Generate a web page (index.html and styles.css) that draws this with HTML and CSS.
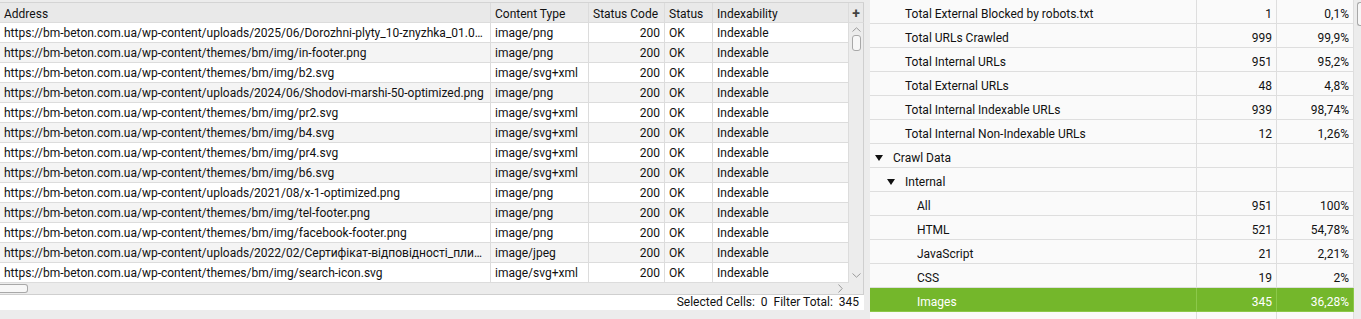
FILE: index.html
```html
<!DOCTYPE html>
<html lang="en">
<head>
  <meta charset="UTF-8">
  <title>Crawl Overview</title>
  <link rel="stylesheet" href="styles.css">
</head>
<body>
  <div class="app">
    <!-- URL table -->
    <section class="urls">
      <div class="row head">
        <span>Address</span>
        <span>Content Type</span>
        <span>Status Code</span>
        <span>Status</span>
        <span>Indexability</span>
        <span class="add">+</span>
      </div>
      <div class="body">
        <div class="rows">
          <div class="row"><span>https://bm-beton.com.ua/wp-content/uploads/2025/06/Dorozhni-plyty_10-znyzhka_01.06.2025.png</span><span>image/png</span><span class="num">200</span><span>OK</span><span>Indexable</span></div>
          <div class="row"><span>https://bm-beton.com.ua/wp-content/themes/bm/img/in-footer.png</span><span>image/png</span><span class="num">200</span><span>OK</span><span>Indexable</span></div>
          <div class="row"><span>https://bm-beton.com.ua/wp-content/themes/bm/img/b2.svg</span><span>image/svg+xml</span><span class="num">200</span><span>OK</span><span>Indexable</span></div>
          <div class="row"><span>https://bm-beton.com.ua/wp-content/uploads/2024/06/Shodovi-marshi-50-optimized.png</span><span>image/png</span><span class="num">200</span><span>OK</span><span>Indexable</span></div>
          <div class="row"><span>https://bm-beton.com.ua/wp-content/themes/bm/img/pr2.svg</span><span>image/svg+xml</span><span class="num">200</span><span>OK</span><span>Indexable</span></div>
          <div class="row"><span>https://bm-beton.com.ua/wp-content/themes/bm/img/b4.svg</span><span>image/svg+xml</span><span class="num">200</span><span>OK</span><span>Indexable</span></div>
          <div class="row"><span>https://bm-beton.com.ua/wp-content/themes/bm/img/pr4.svg</span><span>image/svg+xml</span><span class="num">200</span><span>OK</span><span>Indexable</span></div>
          <div class="row"><span>https://bm-beton.com.ua/wp-content/themes/bm/img/b6.svg</span><span>image/svg+xml</span><span class="num">200</span><span>OK</span><span>Indexable</span></div>
          <div class="row"><span>https://bm-beton.com.ua/wp-content/uploads/2021/08/x-1-optimized.png</span><span>image/png</span><span class="num">200</span><span>OK</span><span>Indexable</span></div>
          <div class="row"><span>https://bm-beton.com.ua/wp-content/themes/bm/img/tel-footer.png</span><span>image/png</span><span class="num">200</span><span>OK</span><span>Indexable</span></div>
          <div class="row"><span>https://bm-beton.com.ua/wp-content/themes/bm/img/facebook-footer.png</span><span>image/png</span><span class="num">200</span><span>OK</span><span>Indexable</span></div>
          <div class="row"><span>https://bm-beton.com.ua/wp-content/uploads/2022/02/Сертифікат-відповідності_плити-дорожні.jpg</span><span>image/jpeg</span><span class="num">200</span><span>OK</span><span>Indexable</span></div>
          <div class="row"><span>https://bm-beton.com.ua/wp-content/themes/bm/img/search-icon.svg</span><span>image/svg+xml</span><span class="num">200</span><span>OK</span><span>Indexable</span></div>
        </div>
        <div class="vscroll">
          <svg width="9" height="5" viewBox="0 0 9 5"><path d="M0.5 4.5 L4.5 0.8 L8.5 4.5" fill="none" stroke="#9a9a9a"/></svg>
          <span class="vthumb"></span>
          <svg class="down" width="9" height="5" viewBox="0 0 9 5"><path d="M0.5 0.5 L4.5 4.2 L8.5 0.5" fill="none" stroke="#9a9a9a"/></svg>
        </div>
      </div>
      <div class="hscroll">
        <span class="hthumb"></span>
        <svg width="5" height="9" viewBox="0 0 5 9"><path d="M0.5 0.5 L4.2 4.5 L0.5 8.5" fill="none" stroke="#9a9a9a"/></svg>
      </div>
      <div class="status">Selected Cells:&nbsp; 0&nbsp; Filter Total:&nbsp; 345</div>
    </section>

    <!-- Overview tree -->
    <section class="overview">
      <div class="tree">
        <div class="item"><span class="label l1">Total External Blocked by robots.txt</span><span>1</span><span>0,1%</span></div>
        <div class="item"><span class="label l1">Total URLs Crawled</span><span>999</span><span>99,9%</span></div>
        <div class="item"><span class="label l1">Total Internal URLs</span><span>951</span><span>95,2%</span></div>
        <div class="item"><span class="label l1">Total External URLs</span><span>48</span><span>4,8%</span></div>
        <div class="item"><span class="label l1">Total Internal Indexable URLs</span><span>939</span><span>98,74%</span></div>
        <div class="item"><span class="label l1">Total Internal Non-Indexable URLs</span><span>12</span><span>1,26%</span></div>
        <div class="item"><span class="label l0"><i class="tri"></i>Crawl Data</span><span></span><span></span></div>
        <div class="item"><span class="label l0b"><i class="tri"></i>Internal</span><span></span><span></span></div>
        <div class="item"><span class="label l2">All</span><span>951</span><span>100%</span></div>
        <div class="item"><span class="label l2">HTML</span><span>521</span><span>54,78%</span></div>
        <div class="item"><span class="label l2">JavaScript</span><span>21</span><span>2,21%</span></div>
        <div class="item"><span class="label l2">CSS</span><span>19</span><span>2%</span></div>
        <div class="item selected"><span class="label l2">Images</span><span>345</span><span>36,28%</span></div>
        <div class="item"><span class="label l2"></span><span></span><span></span></div>
      </div>
      <div class="edge"><span class="edge-thumb"></span></div>
    </section>
  </div>
</body>
</html>
```

FILE: styles.css
```css
* { box-sizing: border-box; }
html, body { margin: 0; padding: 0; }
body {
  font-family: Roboto, "Liberation Sans", sans-serif;
  font-size: 12px;
  color: #111;
  background: #ececec;
  height: 319px;
  overflow: hidden;
}
.app { display: flex; gap: 6px; height: 319px; overflow: hidden; }

/* Left table */
.urls { width: 864px; flex: none; padding-top: 2px; display: flex; flex-direction: column; }
.row {
  display: grid;
  grid-template-columns: 491px 98px 76px 48px 136px;
  height: 20px;
}
.row span {
  padding: 2px 4px 0; line-height: 17px;
  border-right: 1px solid #dcdcdc; border-bottom: 1px solid #dcdcdc;
  white-space: nowrap; overflow: hidden; text-overflow: ellipsis;
}
.row .num { text-align: right; }
.head {
  grid-template-columns: 491px 98px 76px 48px 136px 15px;
  background: #e9e9e9;
  border-top: 1px solid #d4d4d4;
  height: 21px;
}
.head span { padding-top: 2px; line-height: 18px; }
.head .add { padding: 0; text-align: center; font-weight: bold; font-size: 14px; line-height: 20px; color: #444; border-right: 1px solid #cfcfcf; }
.body { display: flex; }
.rows { width: 849px; }
.rows .row { background: #fff; }
.rows .row:nth-child(even) { background: #f4f4f4; }
.vscroll {
  width: 15px; border-right: 1px solid #cfcfcf; background: #ececec;
  display: flex; flex-direction: column; align-items: center; padding-top: 4px;
}
.vthumb { width: 9px; height: 16px; margin-top: 3px; border: 1px solid #a8a8a8; border-radius: 3px; background: #f7f7f7; }
.vscroll .down { margin-top: auto; margin-bottom: 5px; }
.hscroll {
  height: 12px; background: #ececec; border-bottom: 1px solid #cfcfcf; border-right: 1px solid #cfcfcf;
  display: flex; align-items: center; justify-content: space-between; padding-right: 20px;
}
.hthumb { width: 28px; height: 9px; border: 1px solid #a8a8a8; border-left: none; border-radius: 0 3px 3px 0; background: #f7f7f7; }
.status {
  height: 15px; background: #fff; text-align: right; padding-right: 5px; line-height: 15px;
}

/* Right tree */
.overview { flex: 1; display: flex; background: #ececec; height: 319px; overflow: hidden; }
.tree { width: 484px; }
.item {
  display: grid;
  grid-template-columns: 327px 80px 77px;
  height: 24px; background: #fafafa;
}
.item span {
  border-right: 1px solid #dedede; border-bottom: 1px solid #dedede;
  padding-top: 5px; line-height: 18px; padding-right: 4px; text-align: right; white-space: nowrap;
}
.item .label { text-align: left; display: flex; align-items: center; padding-top: 5px; }
.l1 { padding-left: 35px; }
.l0 { padding-left: 5px; }
.l0b { padding-left: 17px; }
.l2 { padding-left: 47px; }
.tri {
  width: 0; height: 0; margin-right: 10px;
  border-left: 4px solid transparent; border-right: 4px solid transparent; border-top: 6px solid #111;
}
.item.selected { background: #74b72b; color: #fff; }
.item.selected span { border-right-color: #8cc84a; border-bottom-color: #8cc84a; }
.edge { flex: 1; padding: 2px 0 0 3px; }
.edge-thumb { display: block; width: 6px; height: 24px; border: 1px solid #a8a8a8; border-right: none; border-radius: 3px 0 0 3px; background: #f7f7f7; }
```
